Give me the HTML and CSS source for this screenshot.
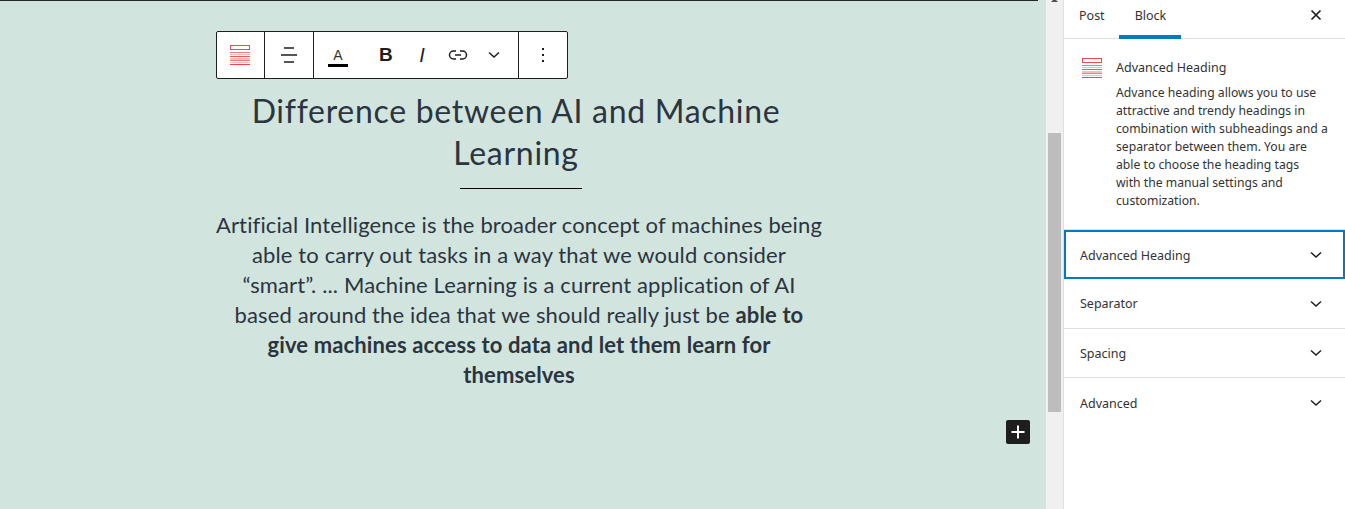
FILE: index.html
```html
<!DOCTYPE html>
<html>
<head>
  <title>Edit Post</title>
  <link rel="stylesheet" href="styles.css">
</head>
<body>
  <div class="editor">
    <main class="canvas">
      <div class="top-line"></div>
      <div class="column">
        <div class="toolbar">
          <div class="tool-group tool-first">
            <svg width="22" height="22" viewBox="0 0 22 22">
              <rect x="1.5" y="1.5" width="19" height="4" fill="none" stroke="#ea4a4a" stroke-width="1"/>
              <rect x="1" y="8" width="20" height="1" fill="#f47c7c"/>
              <rect x="1" y="10" width="20" height="1" fill="#fbb"/>
              <rect x="1" y="12" width="20" height="1" fill="#f05555"/>
              <rect x="1" y="14" width="20" height="2" fill="#fbb"/>
              <rect x="1" y="16" width="20" height="1" fill="#f47c7c"/>
              <rect x="1" y="18" width="20" height="1" fill="#fbb"/>
              <rect x="1" y="20" width="20" height="1" fill="#ea4a4a"/>
            </svg>
          </div>
          <div class="tool-group tool-align">
            <svg width="18" height="18" viewBox="0 0 18 18" fill="#555">
              <rect x="4" y="1" width="10" height="2"/>
              <rect x="1" y="8" width="16" height="2"/>
              <rect x="4" y="15" width="10" height="2"/>
            </svg>
          </div>
          <div class="tool-group tool-format">
            <span class="tool-color">A</span>
            <span class="tool-bold">B</span>
            <span class="tool-italic">I</span>
            <svg class="tool-link" width="20" height="12" viewBox="0 0 20 12" fill="none" stroke="#1e1e1e" stroke-width="1.500">
              <path d="M8 2H5.500a4 4 0 0 0 0 8H8"/>
              <path d="M12 2h2.500a4 4 0 0 1 0 8H12"/>
              <path d="M7 6h6"/>
            </svg>
            <svg class="tool-more" width="12" height="8" viewBox="0 0 12 8" fill="none" stroke="#1e1e1e" stroke-width="1.500">
              <path d="M1 1.500l5 4.500 5-4.500"/>
            </svg>
          </div>
          <div class="tool-group tool-last">
            <svg width="4" height="16" viewBox="0 0 4 16" fill="#1e1e1e">
              <rect x="1" y="1" width="2" height="2"/>
              <rect x="1" y="7" width="2" height="2"/>
              <rect x="1" y="13" width="2" height="2"/>
            </svg>
          </div>
        </div>

        <h1 class="heading">Difference between AI and Machine<br>Learning</h1>
        <div class="separator"></div>
        <p class="subheading">Artificial Intelligence is the broader concept of machines being<br>able to carry out tasks in a way that we would consider<br>“smart”. ... Machine Learning is a current application of AI<br>based around the idea that we should really just be <strong>able to<br>give machines access to data and let them learn for<br>themselves</strong></p>
      </div>
      <button class="add-block">
        <svg width="14" height="14" viewBox="0 0 14 14" fill="#fff">
          <rect x="6" y="0.500" width="2" height="13"/>
          <rect x="0.500" y="6" width="13" height="2"/>
        </svg>
      </button>
    </main>

    <div class="scrollbar">
      <div class="scroll-top"></div>
      <div class="scroll-thumb"></div>
    </div>

    <aside class="sidebar">
      <div class="tabs">
        <span class="tab">Post</span>
        <span class="tab tab-active">Block</span>
        <svg class="close" width="12" height="12" viewBox="0 0 12 12" fill="none" stroke="#1e1e1e" stroke-width="1.700">
          <path d="M1.500 1.500l9 9M10.500 1.500l-9 9"/>
        </svg>
      </div>

      <div class="block-card">
        <svg class="block-icon" width="22" height="22" viewBox="0 0 22 22">
          <rect x="1.500" y="1.500" width="19" height="4" fill="none" stroke="#ea4a4a" stroke-width="1"/>
          <rect x="1" y="8" width="20" height="1" fill="#f47c7c"/>
          <rect x="1" y="10" width="20" height="1" fill="#fbb"/>
          <rect x="1" y="12" width="20" height="1" fill="#f05555"/>
          <rect x="1" y="14" width="20" height="2" fill="#fbb"/>
          <rect x="1" y="16" width="20" height="1" fill="#f47c7c"/>
          <rect x="1" y="18" width="20" height="1" fill="#fbb"/>
          <rect x="1" y="20" width="20" height="1" fill="#ea4a4a"/>
        </svg>
        <div>
          <h2 class="block-title">Advanced Heading</h2>
          <p class="block-text">Advance heading allows you to use<br>attractive and trendy headings in<br>combination with subheadings and a<br>separator between them. You are<br>able to choose the heading tags<br>with the manual settings and<br>customization.</p>
        </div>
      </div>

      <div class="panel panel-focus"><span>Advanced Heading</span>
        <svg width="12" height="8" viewBox="0 0 12 8" fill="none" stroke="#1e1e1e" stroke-width="1.500"><path d="M1 1.500l5 4.500 5-4.500"/></svg>
      </div>
      <div class="panel"><span>Separator</span>
        <svg width="12" height="8" viewBox="0 0 12 8" fill="none" stroke="#1e1e1e" stroke-width="1.500"><path d="M1 1.500l5 4.500 5-4.500"/></svg>
      </div>
      <div class="panel"><span>Spacing</span>
        <svg width="12" height="8" viewBox="0 0 12 8" fill="none" stroke="#1e1e1e" stroke-width="1.500"><path d="M1 1.500l5 4.500 5-4.500"/></svg>
      </div>
      <div class="panel panel-last"><span>Advanced</span>
        <svg width="12" height="8" viewBox="0 0 12 8" fill="none" stroke="#1e1e1e" stroke-width="1.500"><path d="M1 1.500l5 4.500 5-4.500"/></svg>
      </div>
    </aside>
  </div>
</body>
</html>
```

FILE: styles.css
```css
html, body {
  margin: 0;
  height: 100%;
  overflow: hidden;
}

body {
  font-family: "Noto Sans", sans-serif;
  color: #1e1e1e;
  background: #fff;
}

.editor {
  display: flex;
  height: 509px;
}

.canvas {
  position: relative;
  width: 1046px;
  flex: none;
  background: #d2e4de;
}

.top-line {
  height: 1px;
  width: 1038px;
  background: #23282d;
}

.column {
  width: 610px;
  margin: 30px auto 0;
  padding-right: 4px;
  font-family: Lato, sans-serif;
  color: #2b3540;
  text-align: center;
}

.toolbar {
  display: flex;
  width: 350px;
  height: 46px;
  background: #fff;
  border: 1px solid #1e1e1e;
  border-radius: 2px;
}

.tool-group {
  display: flex;
  align-items: center;
  justify-content: center;
  border-right: 1px solid #1e1e1e;
}

.tool-first {
  width: 47px;
}

.tool-first svg {
  margin-right: 1px;
}

.tool-align {
  width: 48px;
}

.tool-format {
  width: 204px;
  justify-content: flex-start;
}

.tool-last {
  flex: 1;
  border-right: 0;
}

.tool-color {
  margin: 4px 0 0 14px;
  width: 20px;
  border-bottom: 3px solid #000;
  font: 14px/17px "Liberation Sans", sans-serif;
  color: #333;
}

.tool-bold {
  margin-left: 31px;
  width: 12px;
  font: 700 19px/20px "Liberation Sans", sans-serif;
  color: #1e1e1e;
}

.tool-italic {
  margin-left: 28px;
  width: 6px;
  font: italic 400 20px/20px "Liberation Sans", sans-serif;
  color: #1e1e1e;
}

.tool-link {
  margin-left: 23px;
}

.tool-more {
  margin-left: 20px;
}

.heading {
  margin: 11px 10px 0 0;
  font-size: 32px;
  font-weight: 400;
  line-height: 42px;
  letter-spacing: 0.7px;
}

.separator {
  width: 122px;
  height: 1px;
  margin: 14px auto 0;
  background: #000;
}

.subheading {
  margin: 21px 4px 0 0;
  font-size: 22px;
  line-height: 30px;
  letter-spacing: 0.13px;
}

.add-block {
  position: absolute;
  left: 1006px;
  top: 420px;
  width: 24px;
  height: 24px;
  padding: 0;
  border: 0;
  border-radius: 2px;
  background: #1e1e1e;
  display: flex;
  align-items: center;
  justify-content: center;
}

.scrollbar {
  position: relative;
  width: 17px;
  flex: none;
  background: #f0f0f0;
}

.scroll-top {
  width: 3px;
  height: 0;
  margin-left: 5px;
  border-bottom: 2px solid #505050;
  border-left: 2px solid transparent;
  border-right: 2px solid transparent;
}

.scroll-thumb {
  position: absolute;
  left: 2px;
  top: 133px;
  width: 13px;
  height: 279px;
  background: #bdbdbd;
}

.sidebar {
  flex: 1;
  border-left: 1px solid #e0e0e0;
  font-size: 12.500px;
  color: #333;
}

.tabs {
  display: flex;
  align-items: flex-start;
  height: 38px;
  border-bottom: 1px solid #e0e0e0;
  position: relative;
}

.tab {
  padding: 7px 0 0;
  line-height: 18px;
  height: 31px;
}

.tab:first-child {
  margin-left: 15px;
}

.tab-active {
  margin-left: 14px;
  padding: 7px 15px 0 16px;
  border-bottom: 4px solid #007cba;
  height: 28px;
}

.close {
  position: absolute;
  right: 23px;
  top: 9px;
}

.block-card {
  display: flex;
  gap: 13px;
  padding: 18px 0 0 17px;
  height: 172px;
  border-bottom: 1px solid #e0e0e0;
}

.block-icon {
  flex: none;
}

.block-title {
  margin: 1px 0 0;
  font-size: 12.500px;
  font-weight: 400;
  line-height: 20px;
}

.block-text {
  margin: 6px 0 0;
  font-size: 12.200px;
  line-height: 18px;
}

.panel {
  display: flex;
  align-items: center;
  justify-content: space-between;
  box-sizing: border-box;
  height: 49.500px;
  padding: 1px 23px 0 16px;
  border-bottom: 1px solid #e0e0e0;
}

.panel-focus {
  height: 49px;
  padding: 1px 21px 0 14px;
  border: 2px solid #007cba;
}

.panel-last {
  border-bottom: 0;
}
```
